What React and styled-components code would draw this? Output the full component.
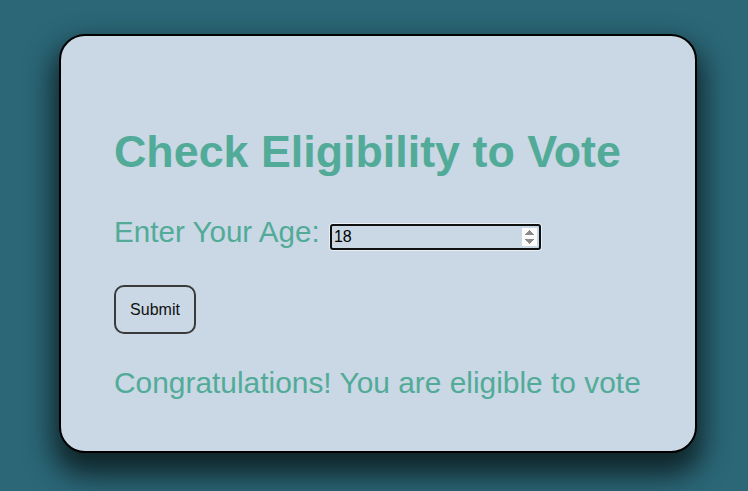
import React, { useState } from "react";
import styled, { createGlobalStyle } from "styled-components";

const Global = createGlobalStyle`
  html, body { margin: 0; padding: 0; }
  body {
    background: #2b6777;
    font-family: "Liberation Sans", Arial, sans-serif;
    width: 748px;
    height: 491px;
    overflow: hidden;
  }
`;

const Page = styled.div`
  padding: 34px 0 0 59px;
`;

const Card = styled.div`
  box-sizing: border-box;
  width: 638px;
  height: 419px;
  background: #c9d8e4;
  border: 2px solid #000;
  border-radius: 26px;
  box-shadow: 0 16px 28px 6px rgba(0, 0, 0, 0.65);
  padding: 90px 53px 0 53px;
  color: #52ab98;
`;

const Title = styled.h1`
  margin: 0;
  font-size: 44.8px;
  font-weight: bold;
  line-height: normal;
`;

const AgeRow = styled.div`
  margin-top: 38px;
  font-size: 29.6px;
  line-height: normal;
`;

const AgeInput = styled.input`
  box-sizing: border-box;
  width: 211px;
  height: 26px;
  margin: 0 0 0 2px;
  padding: 1px 2px;
  font-family: "Liberation Sans", Arial, sans-serif;
  font-size: 16px;
  color: #000;
  background: transparent;
  border: 2px solid #101010;
  border-radius: 3px;
  outline: none;
  box-shadow: 0 0 0 1px rgba(255, 255, 255, 0.6);
  vertical-align: baseline;

  &::-webkit-inner-spin-button {
    opacity: 1;
  }
`;

const SubmitButton = styled.button`
  display: block;
  box-sizing: border-box;
  margin-top: 35px;
  width: 82px;
  height: 49px;
  padding: 0;
  font-family: "Liberation Sans", Arial, sans-serif;
  font-size: 16px;
  color: #111;
  background: transparent;
  border: 2px solid #3a3a3a;
  border-radius: 10px;
  cursor: pointer;
`;

const Result = styled.p`
  margin: 32px 0 0 0;
  font-size: 29.9px;
  line-height: normal;
`;

export default function App() {
  const [age, setAge] = useState("18");
  const [msg, setMsg] = useState("Congratulations! You are eligible to vote");

  const check = () => {
    const n = Number(age);
    setMsg(
      n >= 18
        ? "Congratulations! You are eligible to vote"
        : "Sorry! You are not eligible to vote"
    );
  };

  return (
    <>
      <Global />
      <Page>
        <Card>
          <Title>Check Eligibility to Vote</Title>
          <AgeRow>
            Enter Your Age:{" "}
            <AgeInput
              type="number"
              value={age}
              onChange={(e) => setAge(e.target.value)}
            />
          </AgeRow>
          <SubmitButton onClick={check}>Submit</SubmitButton>
          <Result>{msg}</Result>
        </Card>
      </Page>
    </>
  );
}
